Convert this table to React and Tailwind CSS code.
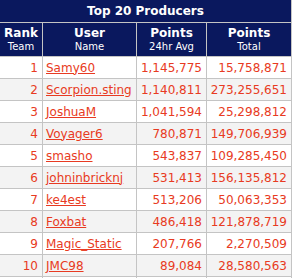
import React from 'react';

const producers = [
  { rank: 1, user: 'Samy60', avg: '1,145,775', total: '15,758,871' },
  { rank: 2, user: 'Scorpion.sting', avg: '1,140,811', total: '273,255,651' },
  { rank: 3, user: 'JoshuaM', avg: '1,041,594', total: '25,298,812' },
  { rank: 4, user: 'Voyager6', avg: '780,871', total: '149,706,939' },
  { rank: 5, user: 'smasho', avg: '543,837', total: '109,285,450' },
  { rank: 6, user: 'johninbricknj', avg: '531,413', total: '156,135,812' },
  { rank: 7, user: 'ke4est', avg: '513,206', total: '50,063,353' },
  { rank: 8, user: 'Foxbat', avg: '486,418', total: '121,878,719' },
  { rank: 9, user: 'Magic_Static', avg: '207,766', total: '2,270,509' },
  { rank: 10, user: 'JMC98', avg: '89,084', total: '28,580,563' },
];

const HeadCell = ({ w, top, sub }) => (
  <div className={`${w} shrink-0 border-r border-[#c4c4c4] flex flex-col items-center justify-center`}>
    <span className="text-[12px] font-bold leading-[14px]">{top}</span>
    <span className="text-[10px] leading-[13px]">{sub}</span>
  </div>
);

export default function App() {
  return (
    <div className="w-[293px] h-[278px] overflow-hidden bg-white" style={{ fontFamily: '"DejaVu Sans", Verdana, sans-serif' }}>
      <div className="w-[292px] border-r border-[#c4c4c4]">
        <div className="h-[23px] bg-[#0a185e] border-b border-[#c4c4c4] flex items-center justify-center text-white text-[12px] font-bold">
          Top 20 Producers
        </div>
        <div className="h-[34px] bg-[#0a185e] border-b border-[#c4c4c4] flex text-white">
          <HeadCell w="w-[43px]" top="Rank" sub="Team" />
          <HeadCell w="w-[94px]" top="User" sub="Name" />
          <HeadCell w="w-[70px]" top="Points" sub="24hr Avg" />
          <div className="flex-1 flex flex-col items-center justify-center">
            <span className="text-[12px] font-bold leading-[14px]">Points</span>
            <span className="text-[10px] leading-[13px]">Total</span>
          </div>
        </div>
        {producers.map((p, i) => (
          <div
            key={p.rank}
            className={`h-[22px] flex border-b border-[#c4c4c4] text-[12px] text-[#e83a22] ${i % 2 === 1 ? 'bg-[#f3f3f3]' : 'bg-white'}`}
          >
            <div className="w-[43px] shrink-0 border-r border-[#c4c4c4] flex items-center justify-end pr-[4px]">{p.rank}</div>
            <div className="w-[94px] shrink-0 border-r border-[#c4c4c4] flex items-center pl-[3px]">
              <a className="underline">{p.user}</a>
            </div>
            <div className="w-[70px] shrink-0 border-r border-[#c4c4c4] flex items-center justify-end pr-[4px]">{p.avg}</div>
            <div className="flex-1 flex items-center justify-end pr-[4px]">{p.total}</div>
          </div>
        ))}
        {/* next row, cut off by the window */}
        <div className="h-[22px] flex bg-white">
          <div className="w-[43px] shrink-0 border-r border-[#c4c4c4]"></div>
          <div className="w-[94px] shrink-0 border-r border-[#c4c4c4]"></div>
          <div className="w-[70px] shrink-0 border-r border-[#c4c4c4]"></div>
          <div className="flex-1"></div>
        </div>
      </div>
    </div>
  );
}
